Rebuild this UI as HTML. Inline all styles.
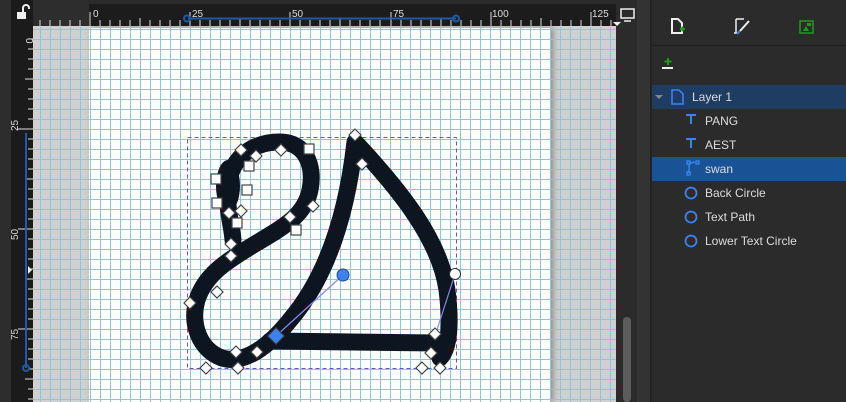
<!DOCTYPE html>
<html><head><meta charset="utf-8"><style>
body{margin:0;width:846px;height:402px;overflow:hidden;background:#2b2b2b;font-family:"Liberation Sans",sans-serif;position:relative}
.abs{position:absolute}
.row{position:absolute;left:652px;width:194px;height:24px;color:#dcdcdc;font-size:12px;line-height:24px}
.row span{position:absolute}
</style></head><body>
<div class="abs" style="left:0;top:0;width:11px;height:402px;background:#2d2d2d"></div>
<div class="abs" style="left:11px;top:0;width:22px;height:402px;background:#1b1b1b"></div>
<div class="abs" style="left:33px;top:0;width:56px;height:26px;background:#2d2d2d"></div>
<div class="abs" style="left:89px;top:4px;width:527px;height:22px;background:#1c1c1c"></div>
<div class="abs" style="left:33px;top:26px;width:583px;height:376px;background:#d0d0d0"></div>
<div class="abs" style="left:89px;top:28px;width:461px;height:374px;background:#fff;box-shadow:3px 0 6px rgba(0,0,0,.35)"></div>
<svg class="abs" style="left:0;top:0" width="846" height="402">
<defs>
<pattern id="g" x="0" y="9" width="10" height="10" patternUnits="userSpaceOnUse">
<path d="M0.5 0V10M0 0.5H10" stroke="#7ecbee" stroke-width="1" fill="none"/>
</pattern>
</defs>
<rect x="33" y="27" width="583" height="375" fill="url(#g)"/>
<g stroke="#ddd" stroke-width="1">
<path d="M90 12V26M190 12V26M290 12V26M391 12V26M491 12V26M591 12V26"/>
<path d="M40 20V26M50 20V26M60 20V26M70 20V26M80 20V26M100 20V26M110 20V26M120 20V26M130 20V26M140 18V26M150 20V26M160 20V26M170 20V26M180 20V26M200 20V26M210 20V26M220 20V26M230 20V26M240 18V26M250 20V26M260 20V26M270 20V26M280 20V26M300 20V26M310 20V26M320 20V26M330 20V26M340 18V26M350 20V26M360 20V26M370 20V26M380 20V26M401 20V26M411 20V26M421 20V26M431 20V26M441 18V26M451 20V26M461 20V26M471 20V26M481 20V26M501 20V26M511 20V26M521 20V26M531 20V26M541 18V26M551 20V26M561 20V26M571 20V26M581 20V26M601 20V26M611 20V26"/>
</g>
<g fill="#ddd" font-size="10" font-family="Liberation Sans">
<text x="93" y="17">0</text><text x="192" y="17">25</text><text x="292" y="17">50</text><text x="393" y="17">75</text><text x="492" y="17">100</text><text x="592" y="17">125</text>
</g>
<path d="M188 18.5H456" stroke="#1d5aa8" stroke-width="2"/>
<circle cx="187" cy="18.5" r="3" fill="none" stroke="#1d5aa8" stroke-width="2"/>
<circle cx="456" cy="18.5" r="3" fill="none" stroke="#1d5aa8" stroke-width="2"/>
<path d="M613 22l4 4 4-4z" fill="#eee"/>
<g stroke="#ddd">
<path d="M28 39H33M28 49H33M28 59H33M28 69H33M25 79H33M28 89H33M28 99H33M28 109H33M28 119H33M28 139H33M28 149H33M28 159H33M28 169H33M25 179H33M28 189H33M28 199H33M28 209H33M28 219H33M28 239H33M28 249H33M28 259H33M28 269H33M25 279H33M28 289H33M28 299H33M28 309H33M28 319H33M28 339H33M28 349H33M28 359H33M28 369H33M25 379H33M28 389H33M28 399H33"/>
<path d="M18 129H33M18 229H33M18 329H33"/>
</g>
<g fill="#ddd" font-size="10" font-family="Liberation Sans">
<text transform="translate(26,38) rotate(90)">0</text>
<text transform="translate(18,131) rotate(-90)">25</text>
<text transform="translate(18,240) rotate(-90)">50</text>
<text transform="translate(18,340) rotate(-90)">75</text>
</g>
<path d="M26 133V368" stroke="#1d5aa8" stroke-width="2"/>
<circle cx="26" cy="368" r="3" fill="none" stroke="#1d5aa8" stroke-width="2"/>
<path d="M28 266l4 4-4 4z" fill="#eee"/>
<rect x="17" y="12" width="9" height="7" fill="#eee"/><path d="M23 12V8a3 3 0 0 1 6 0v1" stroke="#eee" stroke-width="2" fill="none"/>
<rect x="187.5" y="137.5" width="269" height="231" fill="none" stroke="#5a5acc" stroke-dasharray="4,3"/>
<g stroke="#0d1520" stroke-width="17" fill="none" stroke-linecap="round" stroke-linejoin="round">
<path d="M233 240C232 225 226 210 228 185C232 155 255 142 280 142C305 142 315 165 310 190C305 215 285 226 255 244C225 262 205 275 197 300C190 325 200 350 222 358C245 365 270 345 290 320C320 285 345 230 355 142C400 190 440 240 447 290C452 330 448 350 440 358"/>
<path d="M270 341L437 343"/>
</g>
<ellipse cx="228" cy="186" rx="12" ry="26" fill="#0d1520"/>
<path d="M343 275L276 336M455 274L435 336" stroke="#8888ee" stroke-width="1.2"/>
<circle cx="343" cy="275" r="6" fill="#3b82f0" stroke="#1a4fa0"/>
<circle cx="455" cy="274" r="5.5" fill="#fff" stroke="#333"/>
<rect x="270" y="330" width="12" height="12" transform="rotate(45 276 336)" fill="#3b82f0" stroke="#333" stroke-width="1.2"/>
<g fill="#fff" stroke="#444" stroke-width="1.2">
<path d="M355 129l6 6-6 6-6-6zM362 158l6 6-6 6-6-6zM241 144l6 6-6 6-6-6zM256 150l6 6-6 6-6-6zM281 144l6 6-6 6-6-6zM313 200l6 6-6 6-6-6zM290 211l6 6-6 6-6-6zM229 207l6 6-6 6-6-6zM241 205l6 6-6 6-6-6zM231 238l6 6-6 6-6-6zM231 250l6 6-6 6-6-6zM217 286l6 6-6 6-6-6zM190 297l6 6-6 6-6-6zM236 346l6 6-6 6-6-6zM257 346l6 6-6 6-6-6zM206 362l6 6-6 6-6-6zM238 362l6 6-6 6-6-6zM435 328l6 6-6 6-6-6zM431 347l6 6-6 6-6-6zM422 362l6 6-6 6-6-6zM440 362l6 6-6 6-6-6z"/>
<rect x="304" y="144" width="10" height="10"/><rect x="244" y="161" width="10" height="10"/><rect x="211" y="174" width="10" height="10"/><rect x="242" y="185" width="10" height="10"/><rect x="212" y="198" width="10" height="10"/><rect x="232" y="218" width="10" height="10"/><rect x="291" y="225" width="10" height="10"/>
</g>
<rect x="623" y="317" width="8" height="85" rx="4" fill="#5c5c5c"/>
<rect x="637" y="0" width="13" height="402" fill="#333"/>
<rect x="650" y="0" width="2" height="402" fill="#222"/>
<rect x="621" y="9" width="13" height="9" fill="none" stroke="#eee" stroke-width="1.5"/><path d="M624 21H631" stroke="#eee" stroke-width="1.5"/>
<path d="M672 19h6l4 4v10h-10z" fill="none" stroke="#eee" stroke-width="2"/><path d="M680 29h5M682.5 26.5v5" stroke="#1a9e1a" stroke-width="2"/>
<path d="M736 19h8M736 19v14M734 33h3" stroke="#eee" stroke-width="1.5" fill="none"/><path d="M749 21l-9 10" stroke="#eee" stroke-width="2"/><path d="M740 31l-3 3" stroke="#3b82f0" stroke-width="2"/>
<rect x="800" y="21" width="13" height="12" fill="none" stroke="#1a9e1a" stroke-width="1.5"/><path d="M803 31l3-5 3 5z" fill="#1a9e1a"/><rect x="807" y="23" width="4" height="3" fill="#1a9e1a"/>
<path d="M652 45.5H846" stroke="#1f1f1f"/>
<path d="M663 68h10M668 58v7M664.5 61.5h7" stroke="#1a9e1a" stroke-width="2"/><path d="M662 68h11" stroke="#eee" stroke-width="2"/>
</svg>
<div class="abs" style="left:652px;top:85px;width:194px;height:24px;background:#1f3c62"></div>
<div class="abs" style="left:652px;top:157px;width:194px;height:24px;background:#1a5296"></div>
<svg class="abs" style="left:652px;top:85px" width="194" height="170">
<path d="M3 10l4 4 4-4z" fill="#888"/>
<path d="M20 5h7l4 4v10h-11z" fill="none" stroke="#3b82f0" stroke-width="1.6"/>
<g fill="#3b82f0"><rect x="34" y="29" width="10" height="2"/><rect x="38" y="29" width="2" height="10"/>
<rect x="34" y="53" width="10" height="2"/><rect x="38" y="53" width="2" height="10"/></g>
<g stroke="#3b82f0" stroke-width="1.4" fill="none"><path d="M37 78v10M37 80q0-2 6-3"/><rect x="35" y="76" width="3" height="3"/><rect x="44" y="76" width="3" height="3"/><rect x="35" y="87" width="3" height="3"/>
<circle cx="39" cy="108" r="5.5" stroke-width="1.8"/><circle cx="39" cy="132" r="5.5" stroke-width="1.8"/><circle cx="39" cy="156" r="5.5" stroke-width="1.8"/></g>
</svg>
<div class="row" style="top:85px"><span style="left:40px">Layer 1</span></div>
<div class="row" style="top:109px"><span style="left:53px">PANG</span></div>
<div class="row" style="top:133px"><span style="left:53px">AEST</span></div>
<div class="row" style="top:157px"><span style="left:53px">swan</span></div>
<div class="row" style="top:181px"><span style="left:53px">Back Circle</span></div>
<div class="row" style="top:205px"><span style="left:53px">Text Path</span></div>
<div class="row" style="top:229px"><span style="left:53px">Lower Text Circle</span></div>
</body></html>
